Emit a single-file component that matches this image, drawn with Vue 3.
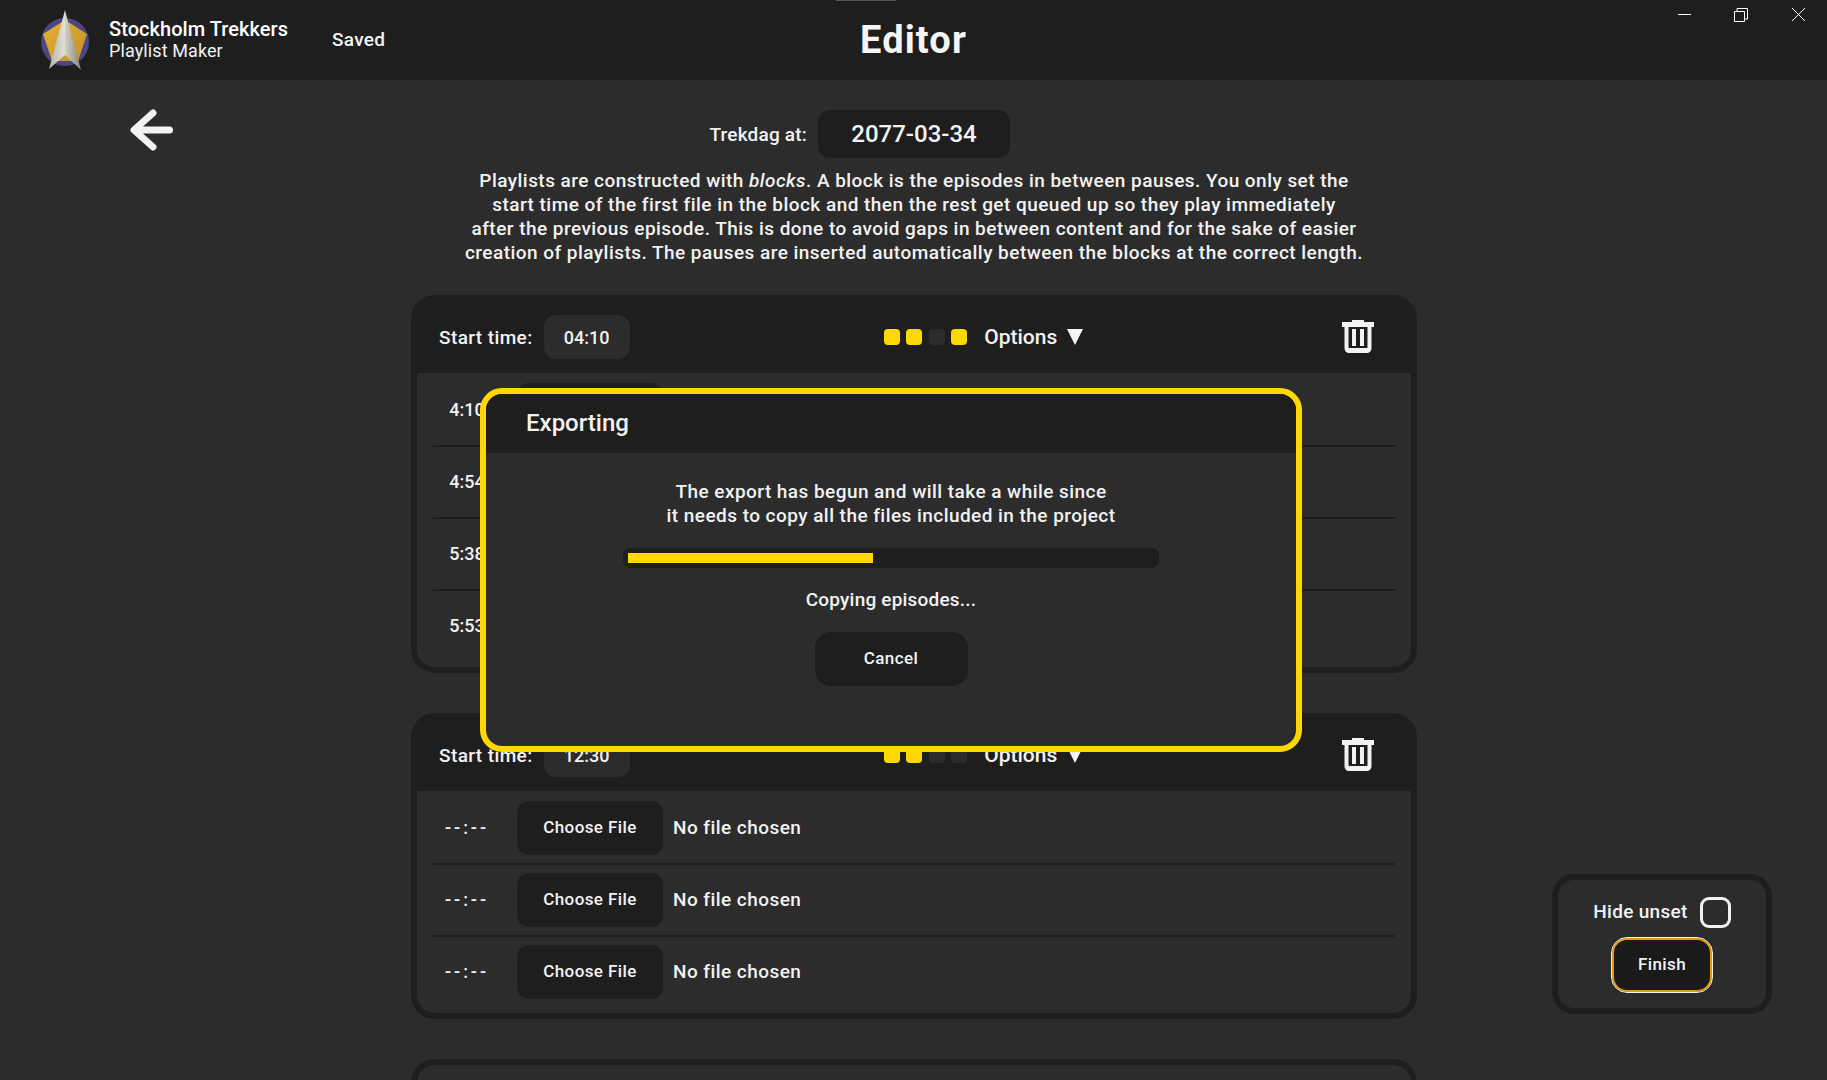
<script setup>
const blocks = [
  {
    start: "04:10",
    dots: [true, true, false, true],
    rows: [
      { time: "4:10", file: true },
      { time: "4:54", file: true },
      { time: "5:38", file: true },
      { time: "5:53", file: true },
    ],
  },
  {
    start: "12:30",
    dots: [true, true, false, false],
    rows: [
      { time: "--:--", file: false },
      { time: "--:--", file: false },
      { time: "--:--", file: false },
    ],
  },
];
</script>

<template>
  <div class="app">
    <header class="topbar">
      <div class="brand">
        <svg class="logo" viewBox="0 0 50 62" width="50" height="62">
          <defs>
            <linearGradient id="goldFill" x1="0" y1="0" x2="1" y2="1">
              <stop offset="0" stop-color="#e6b136" />
              <stop offset="1" stop-color="#c2922a" />
            </linearGradient>
            <linearGradient id="arrowLeft" x1="0" y1="0" x2="1" y2="0">
              <stop offset="0" stop-color="#b4b3a4" />
              <stop offset="1" stop-color="#e2e1d6" />
            </linearGradient>
            <linearGradient id="arrowRight" x1="0" y1="0" x2="1" y2="0">
              <stop offset="0" stop-color="#d2d1c4" />
              <stop offset="1" stop-color="#85847a" />
            </linearGradient>
          </defs>
          <circle cx="25" cy="32" r="24" fill="#4d4680" />
          <polygon points="25,10 47,24 38,51 12,51 3,24" fill="url(#goldFill)" />
          <polygon points="25,0 9,59 25,45" fill="url(#arrowLeft)" />
          <polygon points="25,0 41,60 25,45" fill="url(#arrowRight)" />
        </svg>
        <div class="brand-text">
          <div class="brand-name">Stockholm Trekkers</div>
          <div class="brand-sub">Playlist Maker</div>
        </div>
        <div class="saved">Saved</div>
      </div>
      <h1 class="page-title">Editor</h1>
      <div class="window-controls">
        <svg width="227" height="30" viewBox="0 0 227 30" fill="none" stroke="#fff" stroke-width="1">
          <path d="M78 14.500h13" />
          <path d="M134.500 11.500h10v10h-10z" />
          <path d="M137 11v-2.500h10.500v10.500h-3" />
          <path d="M192 8l13 13M205 8l-13 13" />
        </svg>
      </div>
      <div class="drag-tab"></div>
    </header>

    <main class="page">
      <div class="back-col">
        <svg class="back" width="44" height="42" viewBox="0 0 44 42" fill="none" stroke="#f2f2f2" stroke-width="7" stroke-linecap="round" stroke-linejoin="round">
          <path d="M39.500 21H5" />
          <path d="M23 4 4 21l19 17" />
        </svg>
      </div>

      <div class="content">
        <div class="date-row">
          <span class="date-label">Trekdag at:</span>
          <div class="date-box">2077-03-34</div>
        </div>
        <p class="intro">
          Playlists are constructed with <em>blocks</em>. A block is the episodes in between pauses. You only set the<br />
          start time of the first file in the block and then the rest get queued up so they play immediately<br />
          after the previous episode. This is done to avoid gaps in between content and for the sake of easier<br />
          creation of playlists. The pauses are inserted automatically between the blocks at the correct length.
        </p>

        <section v-for="block in blocks" :key="block.start" class="block">
          <div class="block-head">
            <div class="start">
              <span class="start-label">Start time:</span>
              <div class="start-box">{{ block.start }}</div>
            </div>
            <div class="head-mid">
              <div class="dots">
                <span v-for="(on, i) in block.dots" :key="i" class="dot" :class="{ on }"></span>
              </div>
              <span class="options">Options</span>
              <span class="tri"></span>
            </div>
            <svg class="trash" width="32" height="33" viewBox="0 0 32 33">
              <path fill="#f2f2f2" fill-rule="evenodd" d="M10 0h12v2h10v5h-2.500v21c0 3-2 5-5 5h-17c-3 0-5-2-5-5V7H0V2h10zM6.500 7v20c0 .700.300 1 1 1h17c.700 0 1-.300 1-1V7z" />
              <path fill="#f2f2f2" d="M10 9h4v17h-4zM18 9h4v17h-4z" />
            </svg>
          </div>
          <div class="rows">
            <div v-for="(row, i) in block.rows" :key="i" class="row">
              <div class="time" :class="{ unset: !row.file }">{{ row.time }}</div>
              <button class="btn">Choose File</button>
              <span class="file-name">No file chosen</span>
            </div>
          </div>
        </section>

        <section class="block block-empty"></section>
      </div>
    </main>

    <div class="dialog">
      <div class="dialog-head">Exporting</div>
      <div class="dialog-body">
        <p class="dialog-text">
          The export has begun and will take a while since<br />
          it needs to copy all the files included in the project
        </p>
        <div class="progress">
          <div class="progress-fill" :style="{ width: '245px' }"></div>
        </div>
        <div class="status">Copying episodes...</div>
        <button class="btn cancel">Cancel</button>
      </div>
    </div>

    <aside class="finish-panel">
      <div class="hide-row">
        <span class="hide-label">Hide unset</span>
        <span class="check"></span>
      </div>
      <button class="btn finish">Finish</button>
    </aside>
  </div>
</template>

<style>
html,
body {
  margin: 0;
  background: #2c2c2c;
  overflow: hidden;
}
</style>

<style scoped>
.app {
  height: 1080px;
  overflow: hidden;
  background: #2c2c2c;
  color: #f2f2f2;
  font-family: Roboto, "Liberation Sans", sans-serif;
  font-size: 18px;
  position: relative;
}

.topbar {
  height: 80px;
  background: #1e1e1e;
  position: relative;
  display: flex;
  align-items: center;
  justify-content: center;
}

.brand {
  position: absolute;
  left: 40px;
  top: 10px;
  display: flex;
  align-items: center;
}

.logo {
  flex: none;
}

.brand-text {
  margin-left: 19px;
  margin-top: -3px;
  line-height: 22px;
}

.brand-name {
  font-size: 20px;
  font-weight: 500;
  letter-spacing: 0.05px;
  color: #fff;
}

.brand-sub {
  font-size: 18px;
  letter-spacing: 0.1px;
  color: #f2f2f2;
}

.saved {
  margin-left: 44px;
  font-size: 19px;
  font-weight: 500;
  letter-spacing: 0.3px;
  margin-top: -4px;
}

.page-title {
  margin: 0;
  font-size: 38px;
  font-weight: 700;
  color: #f5f5f5;
  letter-spacing: 1.100px;
}

.window-controls {
  position: absolute;
  right: 0;
  top: 0;
  height: 30px;
}

.drag-tab {
  position: absolute;
  left: 836px;
  top: 0;
  width: 60px;
  height: 1px;
  background: #555;
}

.page {
  display: grid;
  grid-template-columns: 411px 1006px 1fr;
}

.back-col {
  padding: 29px 0 0 130px;
}

.back {
  display: block;
}

.content {
  padding-top: 30px;
}

.date-row {
  display: grid;
  grid-template-columns: 1fr 192px 1fr;
  align-items: center;
  column-gap: 11px;
  font-weight: 500;
}

.date-label {
  justify-self: end;
  font-size: 19px;
  letter-spacing: 0.2px;
}

.date-box {
  height: 48px;
  border-radius: 12px;
  background: #1e1e1e;
  display: flex;
  align-items: center;
  justify-content: center;
  font-size: 24px;
  font-weight: 500;
}

.intro {
  margin: 11px 0 30px;
  text-align: center;
  line-height: 24px;
  font-weight: 500;
  font-size: 19px;
  letter-spacing: 0.46px;
  white-space: nowrap;
}

.block {
  border: 6px solid #1e1e1e;
  border-radius: 24px;
  margin-bottom: 40px;
  overflow: hidden;
}

.block-head {
  height: 72px;
  background: #1e1e1e;
  display: flex;
  align-items: center;
  position: relative;
  padding-left: 22px;
}

.start {
  display: flex;
  align-items: center;
  gap: 11px;
  font-weight: 500;
}

.start-label {
  font-size: 19px;
  letter-spacing: 0.4px;
}

.start-box {
  width: 86px;
  height: 44px;
  border-radius: 12px;
  background: #2c2c2c;
  display: flex;
  align-items: center;
  justify-content: center;
}

.head-mid {
  position: absolute;
  left: 467px;
  top: 0;
  height: 72px;
  display: flex;
  align-items: center;
}

.dots {
  display: flex;
  gap: 6.400px;
}

.dot {
  width: 16px;
  height: 16px;
  border-radius: 4px;
  background: #2c2c2c;
}

.dot.on {
  background: #ffd800;
}

.options {
  margin-left: 17px;
  font-size: 21px;
  font-weight: 500;
}

.tri {
  margin-left: 10px;
  width: 0;
  height: 0;
  border-left: 8px solid transparent;
  border-right: 8px solid transparent;
  border-top: 16px solid #f5f5f5;
}

.trash {
  position: absolute;
  left: 925px;
  top: 19px;
}

.rows {
  padding: 2px 16px 0;
}

.row {
  height: 72px;
  box-sizing: border-box;
  padding-top: 8px;
  display: flex;
  align-items: flex-start;
  border-bottom: 2px solid #1e1e1e;
}

.row:last-child {
  border-bottom: 0;
  height: 76px;
}

.time {
  width: 68px;
  height: 54px;
  line-height: 54px;
  text-align: center;
  font-weight: 500;
  margin-right: 16px;
}

.time.unset {
  letter-spacing: 3px;
}

.btn {
  font-family: inherit;
  font-size: 17px;
  font-weight: 500;
  letter-spacing: 0.4px;
  color: #f2f2f2;
  background: #1e1e1e;
  border: 0;
  border-radius: 12px;
  width: 146px;
  height: 54px;
  padding: 0 0 2px;
}

.file-name {
  line-height: 54px;
  margin-left: 10px;
  font-weight: 500;
  font-size: 19px;
  letter-spacing: 0.45px;
}

.block-empty {
  height: 200px;
}

.dialog {
  position: absolute;
  left: 480px;
  top: 388px;
  width: 822px;
  height: 364px;
  box-sizing: border-box;
  border: 6px solid #ffd800;
  border-radius: 22px;
  background: #2c2c2c;
  overflow: hidden;
}

.dialog-head {
  height: 59px;
  background: #1e1e1e;
  padding-left: 40px;
  font-size: 24px;
  font-weight: 500;
  line-height: 59px;
}

.dialog-body {
  display: flex;
  flex-direction: column;
  align-items: center;
}

.dialog-text {
  margin: 27px 0 0;
  text-align: center;
  line-height: 24px;
  font-weight: 500;
  font-size: 19px;
  letter-spacing: 0.45px;
  white-space: nowrap;
}

.progress {
  margin-top: 20px;
  width: 536px;
  height: 20px;
  box-sizing: border-box;
  padding: 5px;
  border-radius: 7px;
  background: #1e1e1e;
}

.progress-fill {
  height: 10px;
  background: #ffd800;
}

.status {
  margin-top: 21px;
  line-height: 22px;
  font-weight: 500;
  font-size: 19px;
  letter-spacing: 0.2px;
}

.cancel {
  margin-top: 21px;
  width: 153px;
  border-radius: 16px;
}

.finish-panel {
  position: absolute;
  left: 1552px;
  top: 874px;
  width: 220px;
  height: 140px;
  box-sizing: border-box;
  border: 6px solid #1e1e1e;
  border-radius: 22px;
  display: flex;
  flex-direction: column;
  align-items: center;
  padding-top: 17px;
}

.hide-row {
  display: flex;
  align-items: center;
  gap: 12px;
  font-weight: 500;
  font-size: 19px;
  letter-spacing: 0.3px;
}

.hide-label {
  margin-top: -2px;
}

.check {
  width: 31px;
  height: 31px;
  box-sizing: border-box;
  border: 3px solid #f2f2f2;
  border-radius: 9px;
}

.finish {
  margin-top: 9px;
  width: 102px;
  height: 56px;
  box-sizing: border-box;
  background: #1a1a1a;
  border: 1px solid #f2f2f2;
  box-shadow: inset 0 0 0 2px #e49a00;
  border-radius: 16px;
}
</style>
